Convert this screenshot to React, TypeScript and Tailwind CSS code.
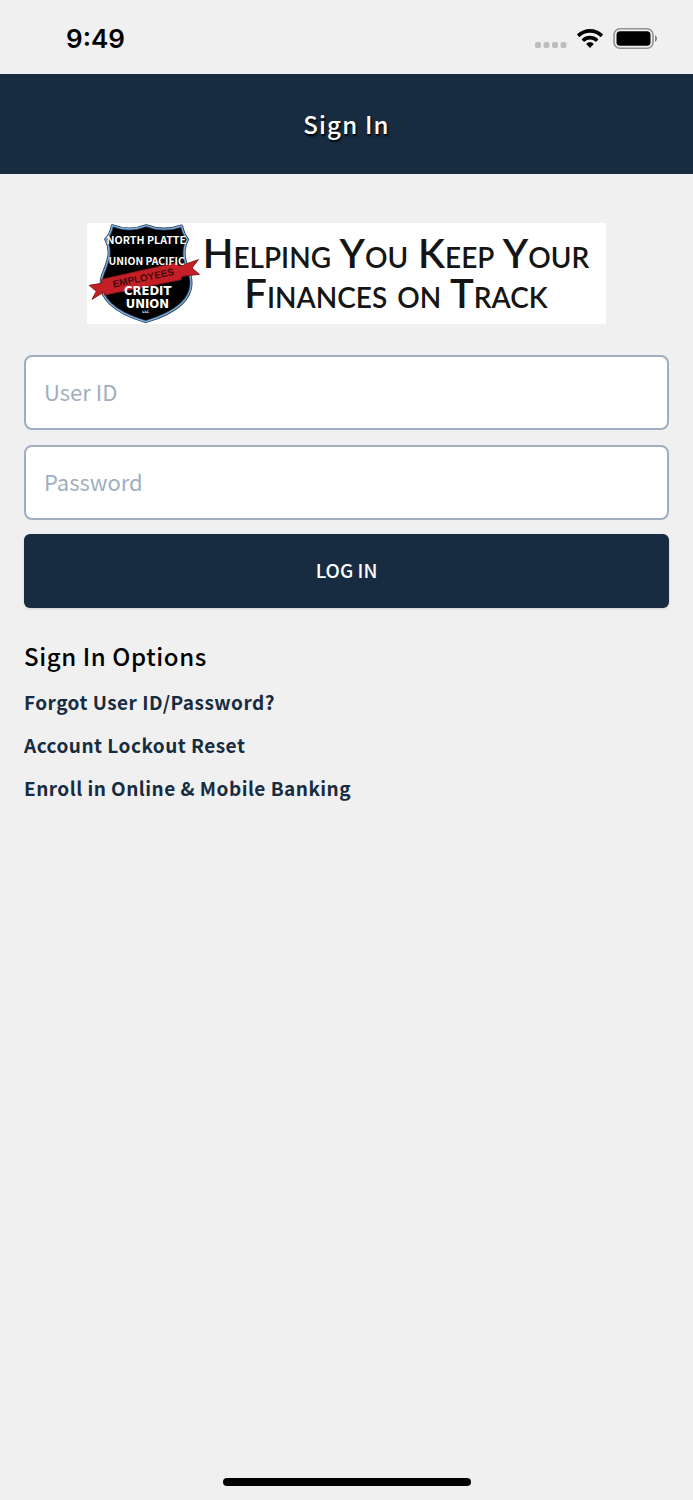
const options = [
  { label: 'Forgot User ID/Password?', href: '#forgot' },
  { label: 'Account Lockout Reset', href: '#lockout' },
  { label: 'Enroll in Online & Mobile Banking', href: '#enroll' },
];

/** Device status bar: clock, cellular dots, wifi and battery */
function StatusBar() {
  return (
    <div className="flex h-[74px] items-center justify-between pl-[66px] pr-9 pt-1">
      <span className="font-[Inter,sans-serif] text-[26px] font-semibold leading-8 text-black">9:49</span>
      <div className="flex items-center gap-[10px]">
        <svg className="h-6 w-8" viewBox="0 0 32 24" fill="#bdbdbd" aria-hidden="true">
          <rect x="0" y="15" width="6" height="6" rx="2" />
          <rect x="8.500" y="15" width="6" height="6" rx="2" />
          <rect x="17" y="15" width="6" height="6" rx="2" />
          <rect x="25.500" y="15" width="6" height="6" rx="2" />
        </svg>
        <svg className="h-5 w-[26px]" viewBox="0 0 26 20" fill="black" aria-hidden="true">
          <path d="M13 0C8 0 3.500 2 .3 5.100c-.3.300-.3.700 0 1l1.600 1.600c.3.300.7.300 1 0C5.600 5.200 9.100 3.800 13 3.800s7.400 1.400 10.100 3.900c.3.300.7.300 1 0l1.600-1.600c.3-.3.300-.7 0-1C22.500 2 18 0 13 0Z" />
          <path d="M13 6.800c-3.100 0-5.900 1.200-8 3.100-.3.300-.3.700 0 1l1.700 1.700c.3.300.7.300 1 0 1.400-1.200 3.300-2 5.300-2s3.900.8 5.300 2c.3.300.7.300 1 0l1.700-1.700c.3-.3.300-.7 0-1-2.100-1.900-4.900-3.100-8-3.100Z" />
          <path d="M13 13.200c-1.300 0-2.500.5-3.400 1.200-.3.300-.3.700 0 1l2.900 3.200c.3.300.7.300 1 0l2.900-3.200c.3-.3.300-.7 0-1-.9-.7-2.100-1.200-3.400-1.200Z" />
        </svg>
        <svg className="h-[22px] w-11" viewBox="0 0 44 22" aria-hidden="true">
          <rect x="1" y="0.800" width="39" height="19.500" rx="6" fill="none" stroke="#929292" strokeWidth="1.600" />
          <rect x="3.500" y="3.300" width="34" height="14.500" rx="3.600" fill="black" />
          <path d="M42 7.200c1.200.6 2 1.800 2 3.300s-.8 2.700-2 3.300Z" fill="#858585" />
        </svg>
      </div>
    </div>
  );
}

const shieldOutline =
  'M97 32C130 45 166 45 199 32C232 45 270 45 305 33C308 49 314 62 323 73C302 111 316 146 330 182C348 249 286 294 197 320C108 294 48 249 67 182C81 146 99 111 77 73C88 62 94 49 97 32Z';

function Shield() {
  return (
    <svg className="h-[101px] w-[115px] shrink-0" viewBox="21 24 345 303" role="img" aria-label="Credit union shield">
      <path d={shieldOutline} fill="black" stroke="#27415f" strokeWidth="9" strokeLinejoin="round" />
      <path d={shieldOutline} fill="none" stroke="#83aed9" strokeWidth="4" />
      <path
        d="M28 211L65 205L65 193L291 143L298 154L355 134L336 159L358 178L306 184L303 194L73 240L72 231L36 253L49 229Z"
        fill="#c41f27"
        stroke="#8b171d"
        strokeWidth="3"
      />
      <text
        x="190"
        y="199"
        fontSize="30"
        fontFamily="Liberation Sans, sans-serif"
        fontWeight="700"
        textAnchor="middle"
        fill="#4a080c"
        transform="rotate(-12 190 189)"
      >
        EMPLOYEES
      </text>
      <g fill="white" fontFamily="Noto Sans CJK SC, sans-serif" fontWeight="700" textAnchor="middle">
        <text x="199" y="86" fontSize="32">NORTH PLATTE</text>
        <text x="200" y="150" fontSize="31">UNION PACIFIC</text>
      </g>
      <g fill="white" fontFamily="DejaVu Sans, sans-serif" fontWeight="700" textAnchor="middle">
        <text x="203" y="240" fontSize="35">CREDIT</text>
        <text x="202" y="280" fontSize="35">UNION</text>
        <text x="197" y="295" fontSize="10">LLC</text>
      </g>
    </svg>
  );
}

function Banner() {
  return (
    <div className="mx-auto flex w-3/4 items-center bg-white">
      <Shield />
      <p className="flex-1 whitespace-nowrap pb-[2px] pr-4 text-center font-[Lato,sans-serif] text-[40px] font-semibold leading-10 text-[#151515] [font-variant-caps:small-caps]">
        Helping You Keep Your
        <br />
        Finances on Track
      </p>
    </div>
  );
}

const fieldClass =
  'h-[75px] w-full rounded-lg border-2 border-[#a0aec0] bg-white px-[18px] pb-1 text-[22px] text-black placeholder:text-[#a0aec0]';

/** Credentials form */
function SignInForm() {
  return (
    <form className="mt-[31px] flex flex-col" onSubmit={(e) => e.preventDefault()}>
      <input type="text" aria-label="User ID" placeholder="User ID" className={fieldClass} />
      <input type="password" aria-label="Password" placeholder="Password" className={`mt-[15px] ${fieldClass}`} />
      <button
        type="submit"
        className="mt-[14px] h-[74px] rounded-md bg-[#172c40] pb-[2px] text-[19px] font-medium text-white shadow-sm"
      >
        LOG IN
      </button>
    </form>
  );
}

export default function App() {
  return (
    <div className="flex min-h-screen flex-col bg-[#f0f0f0] font-['Noto_Sans_CJK_SC',sans-serif]">
      <StatusBar />

      <header className="flex h-[100px] items-center justify-center bg-[#172c40]">
        <h1 className="text-2xl font-medium tracking-wider text-white [text-shadow:1px_2px_2px_black]">Sign In</h1>
      </header>

      <main className="pt-[49px]">
        <Banner />
        <div className="px-6">
          <SignInForm />
          <h2 className="mt-[30px] text-2xl font-medium leading-9 tracking-wide text-black">Sign In Options</h2>
          <ul className="mt-3 flex flex-col gap-[11px]">
            {options.map(({ label, href }) => (
              <li key={label}>
                <a href={href} className="block text-[19px] font-bold leading-8 tracking-wide text-[#172c40]">{label}</a>
              </li>
            ))}
          </ul>
        </div>
      </main>

      <div className="mx-auto mb-[14px] mt-auto h-2 w-[248px] rounded-full bg-black" />
    </div>
  );
}
